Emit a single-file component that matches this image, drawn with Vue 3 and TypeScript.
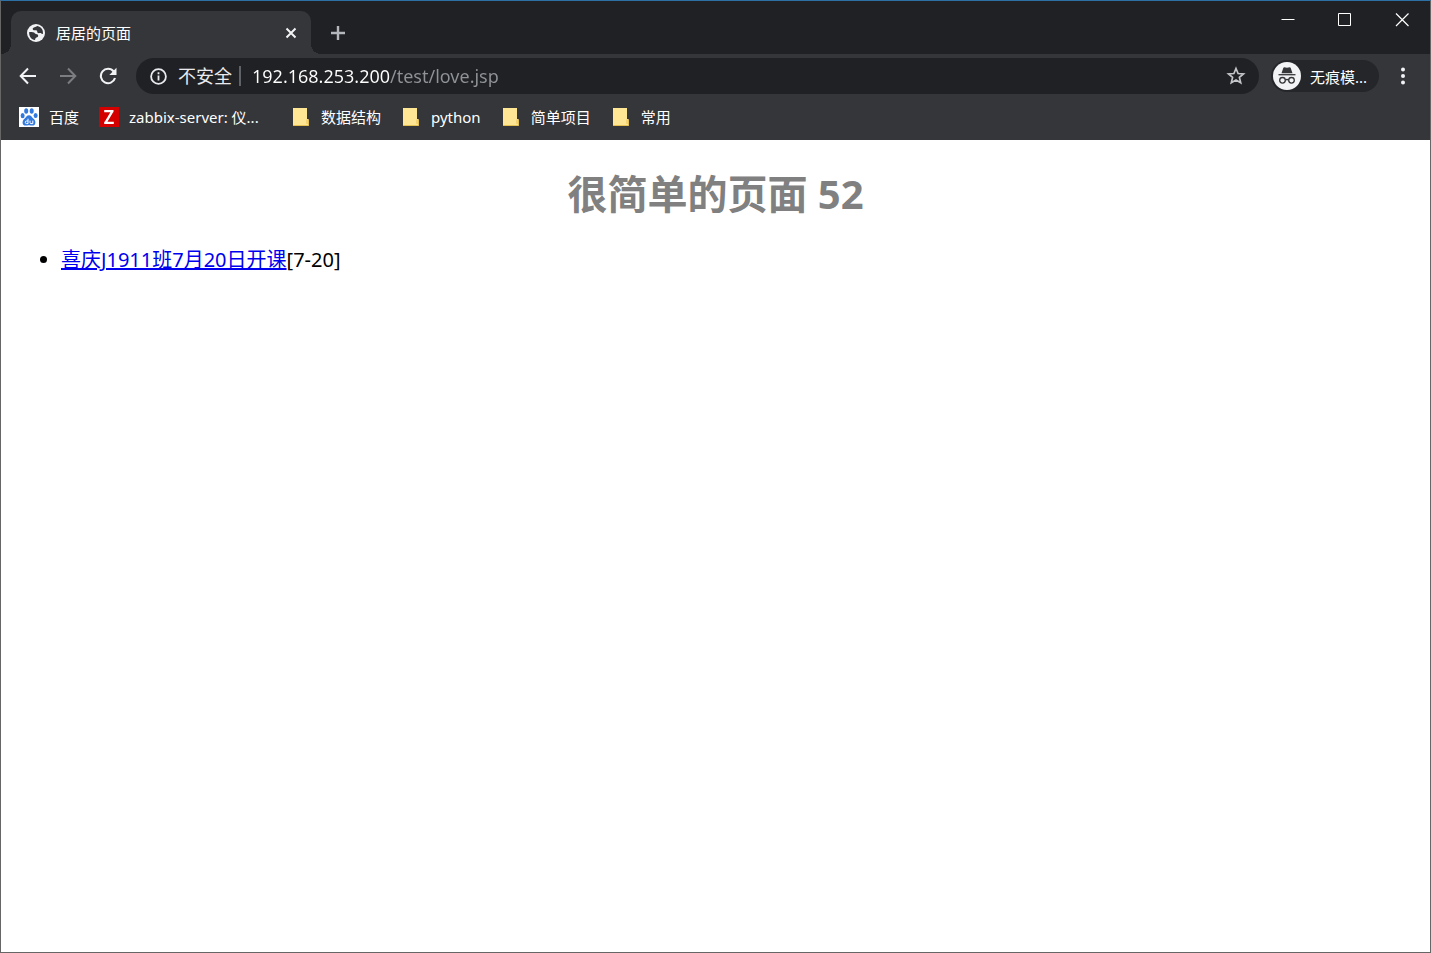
<script setup lang="ts">
import { ref } from 'vue'

interface Bookmark {
  label: string
  icon: 'baidu' | 'zabbix' | 'folder'
  wide?: boolean
}

const bookmarks: Bookmark[] = [
  { label: '百度', icon: 'baidu' },
  { label: 'zabbix-server: 仪...', icon: 'zabbix', wide: true },
  { label: '数据结构', icon: 'folder' },
  { label: 'python', icon: 'folder' },
  { label: '简单项目', icon: 'folder' },
  { label: '常用', icon: 'folder' },
]

const address = ref('192.168.253.200/test/love.jsp')
</script>

<template>
  <div class="window">
    <header class="titlebar">
      <div class="tab">
        <svg class="globe" viewBox="0 0 18 18" aria-hidden="true">
          <circle cx="9" cy="9" r="9" fill="#f1f3f4" />
          <path
            d="M10.500 2.100C9.500 2.300 8.600 3.200 7 3.500 5.300 3.900 5.300 5.800 6.800 6.200c1.200.3 2.300-.4 3.100.6.700.9.100 1.900 1.200 2.300 1.100.4 2.200-.5 3.300.3.6.4 1 .8 1.500.4C16.600 6.200 14 2.800 10.500 2.100zM2.200 7.900C1.700 12 4.400 15.500 8 15.900c.4-.6.100-1.400.7-2 .9-.7 2.300-.5 2.500-1.800.2-1.200-.9-1.900-2.200-2-.9-.1-1.100-1-1.900-1.500C5.700 7.700 3.700 8 2.200 7.900z"
            fill="#35363a"
          />
        </svg>
        <span class="tab-title">居居的页面</span>
        <button class="icon-button close-tab" aria-label="关闭标签页">
          <svg width="12" height="12" viewBox="0 0 12 12">
            <path d="M1.500 1.500l9 9M10.500 1.500l-9 9" stroke="#f1f3f4" stroke-width="2" />
          </svg>
        </button>
      </div>
      <button class="icon-button new-tab" aria-label="新标签页">
        <svg width="16" height="16" viewBox="0 0 16 16">
          <path d="M8 1v14M1 8h14" stroke="#b4b7bb" stroke-width="2.400" />
        </svg>
      </button>
      <div class="window-controls">
        <button class="icon-button" aria-label="最小化">
          <svg width="14" height="14" viewBox="0 0 14 14"><path d="M0.500 6.500h13" stroke="#fff" /></svg>
        </button>
        <button class="icon-button" aria-label="最大化">
          <svg width="14" height="14" viewBox="0 0 14 14">
            <path d="M0.500 0.500h12v12h-12z" fill="none" stroke="#fff" />
          </svg>
        </button>
        <button class="icon-button" aria-label="关闭">
          <svg width="14" height="14" viewBox="0 0 14 14">
            <path d="M1 0.500l12.500 12.500M13.500 0.500L1 13" stroke="#fff" stroke-width="1.200" />
          </svg>
        </button>
      </div>
    </header>

    <nav class="toolbar">
      <div class="nav-buttons">
        <button class="icon-button" aria-label="后退">
          <svg width="18" height="18" viewBox="0 0 18 18">
            <path d="M17 9H2M9 1.500L1.700 9L9 16.500" fill="none" stroke="#f1f3f4" stroke-width="2" />
          </svg>
        </button>
        <button class="icon-button" aria-label="前进">
          <svg width="18" height="18" viewBox="0 0 18 18">
            <path d="M1 9h15M9 1.500L16.300 9L9 16.500" fill="none" stroke="#7c7d80" stroke-width="2" />
          </svg>
        </button>
        <button class="icon-button" aria-label="重新加载">
          <svg width="18" height="18" viewBox="0 0 18 18">
            <path d="M14.700 4.500A7.200 7.200 0 1 0 16 11" fill="none" stroke="#f1f3f4" stroke-width="2.100" />
            <path d="M17.500 0.800v7.200h-7.200z" fill="#f1f3f4" />
          </svg>
        </button>
      </div>

      <div class="omnibox">
        <button class="security">
          <svg width="17" height="17" viewBox="0 0 17 17" aria-hidden="true">
            <circle cx="8.500" cy="8.500" r="7.400" fill="none" stroke="#e8eaed" stroke-width="1.800" />
            <path d="M8.500 7.500v5M8.500 4.300v1.900" stroke="#e8eaed" stroke-width="1.800" />
          </svg>
          <span>不安全</span>
        </button>
        <input v-model="address" class="address" type="text" aria-label="地址栏" spellcheck="false" />
        <button class="icon-button star" aria-label="为此标签页添加书签">
          <svg width="20" height="20" viewBox="0 0 20 20">
            <path
              d="M10 2.500l2.100 5 5.400.4-4.100 3.500 1.300 5.300L10 13.900l-4.700 2.800 1.300-5.300-4.100-3.500 5.400-.4z"
              fill="none"
              stroke="#c3c5c9"
              stroke-width="1.700"
            />
          </svg>
        </button>
      </div>

      <button class="profile">
        <svg width="28" height="28" viewBox="0 0 28 28" aria-hidden="true">
          <circle cx="14" cy="14" r="14" fill="#f1f3f4" />
          <path d="M10.300 6q.2-.8 1-.8l2.700.5 2.700-.5q.8 0 1 .8l1.800 5.300h-11z" fill="#35363a" />
          <path d="M5.500 12.700h17" stroke="#35363a" stroke-width="1.300" />
          <g fill="none" stroke="#35363a" stroke-width="1.300">
            <circle cx="9.500" cy="18.300" r="2.800" />
            <circle cx="18.500" cy="18.300" r="2.800" />
            <path d="M12.300 18q1.700-1 3.400 0" />
          </g>
        </svg>
        <span>无痕模...</span>
      </button>
      <button class="icon-button menu" aria-label="菜单">
        <svg width="4" height="18" viewBox="0 0 4 18" fill="#f1f3f4">
          <circle cx="2" cy="2.500" r="2" />
          <circle cx="2" cy="9" r="2" />
          <circle cx="2" cy="15.500" r="2" />
        </svg>
      </button>
    </nav>

    <nav class="bookmarks" aria-label="书签栏">
      <button v-for="item in bookmarks" :key="item.label" class="bookmark">
        <svg v-if="item.icon === 'baidu'" width="20" height="20" viewBox="0 0 20 20" aria-hidden="true">
          <path d="M0 0h20v20H0z" fill="#fff" />
          <g fill="#3179dc">
            <ellipse cx="7.200" cy="4" rx="2" ry="2.800" />
            <ellipse cx="12.700" cy="4" rx="2" ry="2.800" />
            <ellipse cx="3.600" cy="8.700" rx="2" ry="2.600" />
            <ellipse cx="16.600" cy="8.500" rx="2" ry="2.600" />
            <path d="M10 8.200c2 0 2.800 1.900 4.300 3.200 3.300 2.700 2.500 7.200-1 7.200-1.300 0-2-.3-3.300-.3s-2 .3-3.300.3c-3.500 0-4.300-4.500-1-7.200C7.200 10.100 8 8.200 10 8.200z" />
          </g>
          <path
            d="M9 11.700v5M9 14H7.500q-1.200 0-1.200 1.300t1.200 1.300H9M11 13.600v2q0 1 1 1h1.800v-3"
            fill="none"
            stroke="#fff"
          />
        </svg>
        <svg v-else-if="item.icon === 'zabbix'" width="20" height="20" viewBox="0 0 20 20" aria-hidden="true">
          <path d="M0 0h20v20H0z" fill="#d40000" />
          <path d="M5.200 4.200h9.300M5.200 15.800h9.600M13.400 4.200L6.400 15.800" stroke="#fff" stroke-width="2.300" />
        </svg>
        <svg v-else width="20" height="20" viewBox="0 0 20 20" aria-hidden="true">
          <path d="M2 1h14v11h1.500v7H2z" fill="#ffe694" />
          <path d="M16 12.500v4.500M2 18.500h15.500v-6" fill="none" stroke="#e4bf52" />
        </svg>
        <span :class="{ wide: item.wide }">{{ item.label }}</span>
      </button>
    </nav>

    <main class="page">
      <h1>很简单的页面 52</h1>
      <ul>
        <li><a href="#">喜庆J1911班7月20日开课</a>[7-20]</li>
      </ul>
    </main>
  </div>
</template>

<style>
body {
  margin: 0;
}
</style>

<style scoped>
.window {
  box-sizing: border-box;
  min-height: 100vh;
  border: 1px solid #666;
  border-top-color: #2d70a5;
  background: #fff;
  color: #fff;
  font-family: 'Noto Sans', 'Noto Sans CJK SC', sans-serif;
  font-size: 15px;
}

button {
  border: 0;
  padding: 0;
  background: none;
  color: inherit;
  font: inherit;
}

svg {
  display: block;
  flex: none;
}

.icon-button {
  display: flex;
  align-items: center;
  justify-content: center;
}

.titlebar {
  display: flex;
  align-items: flex-end;
  height: 53px;
  padding-left: 10px;
  background: #202124;
}

.tab {
  position: relative;
  box-sizing: border-box;
  display: flex;
  align-items: center;
  width: 300px;
  height: 43px;
  padding: 0 10px 0 16px;
  border-radius: 10px 10px 0 0;
  background: #35363a;
}

.tab::before,
.tab::after {
  content: '';
  position: absolute;
  bottom: 0;
  width: 10px;
  height: 10px;
}

.tab::before {
  right: 100%;
  background: radial-gradient(circle at 0 0, #202124 10px, #35363a 10px);
}

.tab::after {
  left: 100%;
  background: radial-gradient(circle at 100% 0, #202124 10px, #35363a 10px);
}

.globe {
  width: 18px;
  height: 18px;
}

.tab-title {
  flex: 1;
  margin-left: 11px;
  line-height: 20px;
}

.close-tab {
  width: 20px;
  height: 20px;
}

.new-tab {
  width: 36px;
  height: 43px;
  margin-left: 9px;
}

.window-controls {
  display: flex;
  align-self: flex-start;
  margin-left: auto;
}

.window-controls button {
  width: 57px;
  height: 37px;
}

.toolbar {
  display: flex;
  align-items: center;
  height: 44px;
  padding: 0 11px 0 7px;
  background: #35363a;
}

.nav-buttons {
  display: flex;
}

.nav-buttons button {
  width: 40px;
  height: 36px;
}

.omnibox {
  flex: 1;
  display: flex;
  align-items: center;
  min-width: 0;
  height: 36px;
  margin: 0 12px 0 8px;
  padding: 0 8px 0 14px;
  border-radius: 18px;
  background: #202124;
  font-size: 18px;
}

.security {
  display: flex;
  align-items: center;
  gap: 11px;
  padding-right: 7px;
  border-right: 2px solid #5f6368;
  line-height: 20px;
  color: #e8eaed;
}

.address {
  flex: 1;
  min-width: 0;
  margin-left: 11px;
  border: 0;
  padding: 0;
  outline: 0;
  background: linear-gradient(90deg, #fff 138px, #8f9398 138px);
  background-clip: text;
  -webkit-background-clip: text;
  -webkit-text-fill-color: transparent;
  color: #fff;
  font: inherit;
}

.star {
  width: 30px;
  height: 30px;
}

.profile {
  box-sizing: border-box;
  display: flex;
  align-items: center;
  gap: 9px;
  width: 108px;
  height: 32px;
  padding-left: 2px;
  border-radius: 16px;
  background: #24262a;
  white-space: nowrap;
}

.menu {
  width: 32px;
  height: 32px;
  margin-left: 8px;
}

.bookmarks {
  display: flex;
  gap: 20px;
  height: 42px;
  padding-left: 18px;
  background: #35363a;
}

.bookmark {
  display: flex;
  align-items: center;
  gap: 10px;
  height: 38px;
  line-height: 20px;
  white-space: nowrap;
}

.wide {
  width: 142px;
  text-align: left;
}

.page {
  padding: 0 10px;
  color: #000;
  font-size: 20px;
}

h1 {
  margin: 26px 0 25px;
  color: #808080;
  font-size: 40px;
  line-height: 56px;
  text-align: center;
}

ul {
  margin: 0;
  padding-left: 50px;
  line-height: 26px;
}

a {
  color: #0000ee;
}
</style>
